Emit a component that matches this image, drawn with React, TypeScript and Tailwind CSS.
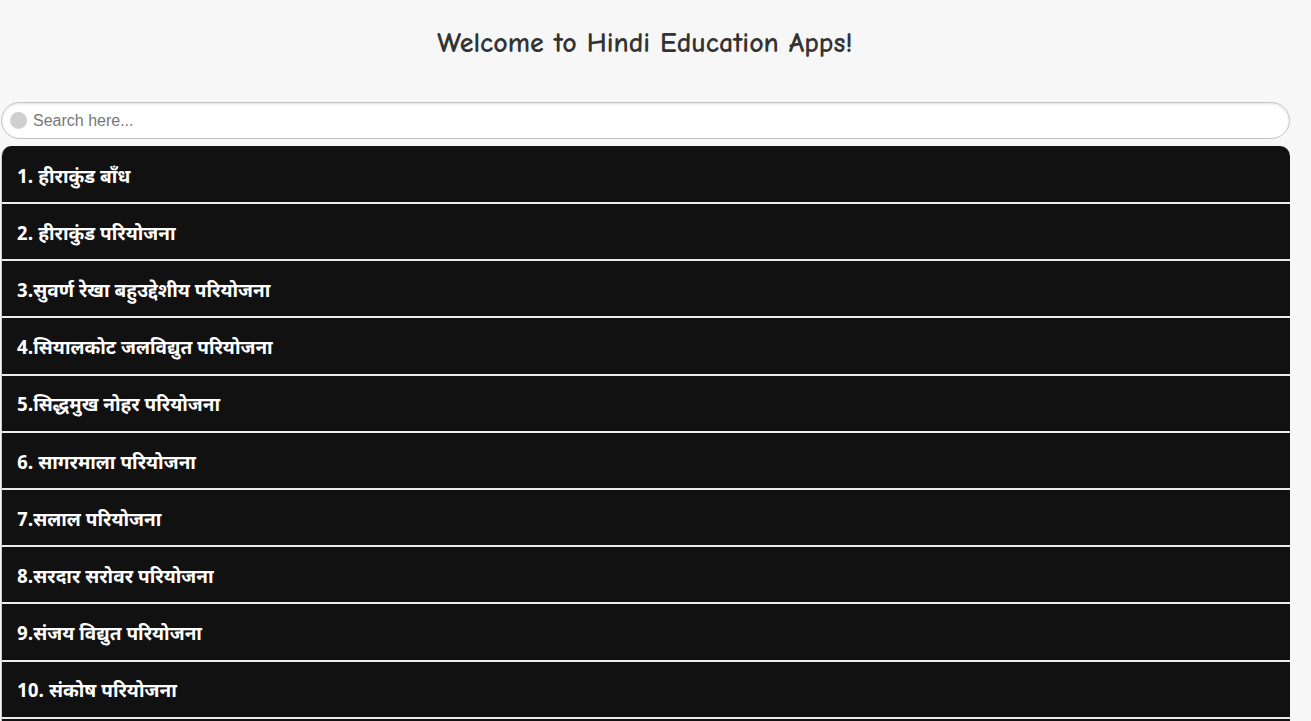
import React from "react";

const items = [
  "1. हीराकुंड बाँध",
  "2. हीराकुंड परियोजना",
  "3.सुवर्ण रेखा बहुउद्देशीय परियोजना",
  "4.सियालकोट जलविद्युत परियोजना",
  "5.सिद्धमुख नोहर परियोजना",
  "6. सागरमाला परियोजना",
  "7.सलाल परियोजना",
  "8.सरदार सरोवर परियोजना",
  "9.संजय विद्युत परियोजना",
  "10. संकोष परियोजना",
];

export default function App() {
  return (
    <div className="h-screen overflow-hidden bg-[#f7f7f7] pr-[21px]">
      {/* header */}
      <h1
        className="h-[88px] pt-[26px] text-center text-[28px] font-bold leading-[34px] text-[#333]"
        style={{ fontFamily: '"Comic Sans MS", "Comic Neue", "Noto Sans", sans-serif' }}
      >
        Welcome to Hindi Education Apps!
      </h1>

      {/* search */}
      <div className="mt-[14px] ml-px flex h-[37px] items-center rounded-full border border-[#c4c4c4] bg-white shadow-[inset_0_1px_3px_rgba(0,0,0,0.12)]">
        <span className="ml-[8px] h-[17px] w-[17px] rounded-full bg-[#cfcfcf]" />
        <input
          className="ml-[6px] flex-1 bg-transparent text-[16px] text-[#555] outline-none placeholder:text-[#777]"
          style={{ fontFamily: '"Liberation Sans", Arial, sans-serif' }}
          placeholder="Search here..."
        />
      </div>

      {/* list */}
      <ul className="mt-[7px] ml-px overflow-hidden rounded-t-[10px] border-l border-[#c8c8c8]">
        {items.map((t, i) => (
          <li
            key={t}
            className={
              (i === 0 ? "h-[58px] pt-[10px] " : "h-[57.2px] pt-[9px] ") +
              "flex items-center border-b-2 border-[#ececec] bg-[#111111] pl-[15px] text-[19px] font-bold text-white"
            }
            style={{ fontFamily: '"Noto Sans Devanagari", "Noto Sans", "Liberation Sans", sans-serif' }}
          >
            {t}
          </li>
        ))}
        <li className="h-[57px] bg-[#111111]" />
      </ul>
    </div>
  );
}
